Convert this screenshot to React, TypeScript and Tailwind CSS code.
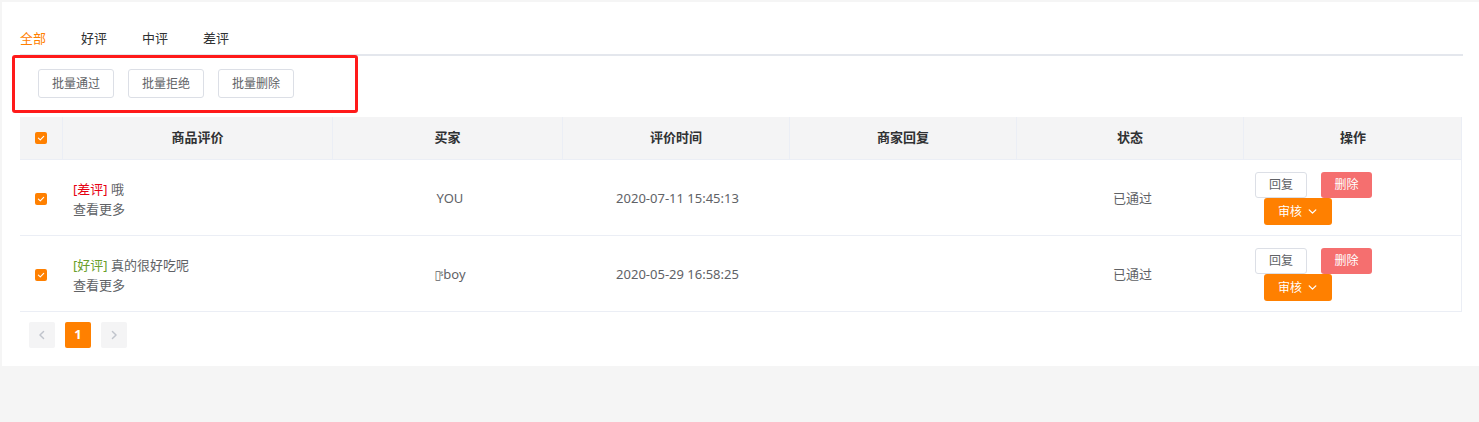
import React from "react";

const Check = () => (
  <span className="inline-flex h-[12px] w-[12px] items-center justify-center rounded-[2px] bg-[#ff8000]">
    <svg width="10" height="10" viewBox="0 0 10 10">
      <path d="M2.4 5.1 L4.3 6.9 L7.7 3.4" fill="none" stroke="white" strokeWidth="1.1" strokeLinecap="round" strokeLinejoin="round" />
    </svg>
  </span>
);

const Chevron = ({ dir, color, size = 10 }: { dir: "down" | "left" | "right"; color: string; size?: number }) => {
  const d = dir === "down" ? "M2 3.5 L5 6.5 L8 3.5" : dir === "left" ? "M6.3 2 L3.3 5 L6.3 8" : "M3.7 2 L6.7 5 L3.7 8";
  return (
    <svg width={size} height={size} viewBox="0 0 10 10">
      <path d={d} fill="none" stroke={color} strokeWidth="1.2" strokeLinecap="round" strokeLinejoin="round" />
    </svg>
  );
};

const cols = "grid grid-cols-[42px_270px_230px_227px_227px_227px_219px]";

type Row = { tag: string; tagColor: string; text: string; buyer: React.ReactNode; time: string };

const rows: Row[] = [
  { tag: "[差评]", tagColor: "text-[#e60012]", text: "哦", buyer: "YOU", time: "2020-07-11 15:45:13" },
  {
    tag: "[好评]",
    tagColor: "text-[#6a9f2a]",
    text: "真的很好吃呢",
    buyer: (
      <span className="inline-flex items-center">
        <span className="font-['DejaVu_Sans',sans-serif] text-[12px] leading-none">▯</span>
        <span className="-ml-[1px] -mt-[3px] text-[7px] leading-none">ŝ</span>
        <span>boy</span>
      </span>
    ),
    time: "2020-05-29 16:58:25",
  },
];

export default function App() {
  return (
    <div className="min-h-[422px] bg-[#f5f5f5] pl-[2px] pt-[2px] font-['Noto_Sans','Noto_Sans_CJK_SC',sans-serif]">
      <div className="relative h-[364px] bg-white pl-[18px] pr-[16px] pt-[20px]">
        {/* tabs */}
        <div className="flex h-[34px] gap-[35px] border-b-2 border-[#e4e7ed] text-[13px] leading-[32px] text-[#303133]">
          <span className="text-[#ff8000]">全部</span>
          <span>好评</span>
          <span>中评</span>
          <span>差评</span>
        </div>

        {/* batch buttons */}
        <div className="ml-[18px] mt-[13px] flex gap-[14px]">
          {["批量通过", "批量拒绝", "批量删除"].map((t) => (
            <button
              key={t}
              className="h-[29px] w-[76px] rounded-[3px] border border-[#dcdfe6] bg-white text-[12px] text-[#606266]"
            >
              {t}
            </button>
          ))}
        </div>

        {/* annotation box */}
        <div className="absolute left-[10px] top-[53px] h-[58px] w-[346px] rounded-[3px] border-[3px] border-[#ff1a1a]" />

        {/* table */}
        <div className="mt-[19px] w-[1442px] border-r border-[#ebeef5]">
          <div className={`${cols} h-[43px] border-b border-[#ebeef5] bg-[#f4f4f5] text-[13px] font-bold text-[#303133]`}>
            <div className="flex items-center justify-center">
              <Check />
            </div>
            {["商品评价", "买家", "评价时间", "商家回复", "状态", "操作"].map((h) => (
              <div key={h} className="flex items-center justify-center border-l border-[#ebeef5]">
                {h}
              </div>
            ))}
          </div>

          {rows.map((r, idx) => (
            <div key={idx} className={`${cols} h-[76px] border-b border-[#ebeef5] text-[13px] text-[#606266]`}>
              <div className="flex items-center justify-center pt-[2px]">
                <Check />
              </div>
              <div className="flex flex-col justify-center pl-[11px] pt-[2px] leading-[20px]">
                <div>
                  <span className={r.tagColor}>{r.tag}</span> {r.text}
                </div>
                <div>查看更多</div>
              </div>
              <div className="flex items-center justify-center pl-[6px] pt-[2px]">{r.buyer}</div>
              <div className="flex items-center justify-center pl-[4px] pt-[2px]">{r.time}</div>
              <div />
              <div className="flex items-center justify-center pl-[6px] pt-[2px]">已通过</div>
              <div className="flex flex-col justify-center pl-[12px] pt-[2px]">
                <div className="flex gap-[14px]">
                  <button className="h-[26px] w-[52px] rounded-[3px] border border-[#dcdfe6] bg-white text-[12px] text-[#606266]">
                    回复
                  </button>
                  <button className="h-[26px] w-[51px] rounded-[3px] bg-[#f56f6f] text-[12px] text-white">删除</button>
                </div>
                <div className="ml-[9px]">
                  <button className="flex h-[27px] w-[68px] items-center justify-center gap-[5px] rounded-[3px] bg-[#ff8000] text-[12px] text-white">
                    审核
                    <Chevron dir="down" color="white" size={11} />
                  </button>
                </div>
              </div>
            </div>
          ))}
        </div>

        {/* pagination */}
        <div className="ml-[9px] mt-[10px] flex gap-[10px]">
          <div className="flex h-[26px] w-[26px] items-center justify-center rounded-[2px] bg-[#f4f4f5]">
            <Chevron dir="left" color="#c0c4cc" size={12} />
          </div>
          <div className="flex h-[26px] w-[26px] items-center justify-center rounded-[2px] bg-[#ff8000] text-[13px] font-bold text-white">
            1
          </div>
          <div className="flex h-[26px] w-[26px] items-center justify-center rounded-[2px] bg-[#f4f4f5]">
            <Chevron dir="right" color="#c0c4cc" size={12} />
          </div>
        </div>
      </div>
    </div>
  );
}
